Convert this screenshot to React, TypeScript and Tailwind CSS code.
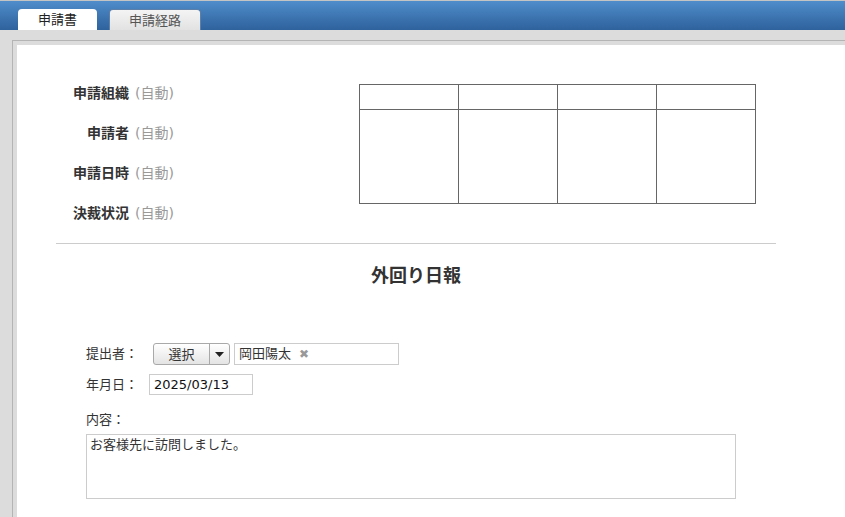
import { useState } from "react";

const font = "font-['DejaVu_Sans','Noto_Sans_CJK_JP',sans-serif]";

const infoRows = [
  { label: "申請組織" },
  { label: "申請者" },
  { label: "申請日時" },
  { label: "決裁状況" },
];

export default function App() {
  const [content, setContent] = useState("お客様先に訪問しました。");

  return (
    <div className={`h-[517px] w-[845px] overflow-hidden bg-[#dcdcdc] text-[13px] text-[#333] ${font}`}>
      {/* Tab bar */}
      <div className="flex h-[30px] items-end gap-[12px] border-t border-[#c4c4c4] bg-gradient-to-b from-[#4f8dca] to-[#2e629d] pl-[18px]">
        <div className="flex h-[21px] w-[79px] items-center justify-center rounded-t-[4px] bg-white text-[13px] leading-none text-[#222]">
          申請書
        </div>
        <div className="flex h-[21px] w-[92px] items-center justify-center rounded-t-[4px] border border-b-0 border-[#5d80aa] bg-gradient-to-b from-[#f4f4f4] to-[#e2e2e2] text-[13px] leading-none text-[#555]">
          申請経路
        </div>
      </div>

      {/* Body frame */}
      <div className="pl-[12px] pt-[10px]">
        <div className="h-[480px] border-l border-t border-[#b4b4b4] pl-[4px] pt-[4px]">
          <div className="h-full bg-white pt-[28px]">
            {/* Header info + approval table */}
            <div className="flex">
              <div className="w-[342px] shrink-0 pl-[38px]">
                {infoRows.map((r) => (
                  <div key={r.label} className="flex h-[40px] items-center text-[14px]">
                    <span className="w-[74px] text-right font-bold text-[#333]">{r.label}</span>
                    <span className="ml-[6px] text-[#999]">(自動)</span>
                  </div>
                ))}
              </div>
              <table className="mt-[11px] h-[120px] w-[397px] border-collapse self-start">
                <tbody>
                  <tr className="h-[25px]">
                    {[0, 1, 2, 3].map((i) => (
                      <td key={i} className="w-1/4 border border-[#666]" />
                    ))}
                  </tr>
                  <tr>
                    {[0, 1, 2, 3].map((i) => (
                      <td key={i} className="border border-[#666]" />
                    ))}
                  </tr>
                </tbody>
              </table>
            </div>

            <div className="ml-[39px] mt-[10px] w-[720px] border-t border-[#cccccc]" />

            <h1 className="ml-[39px] mt-[21px] w-[720px] text-center text-[18px] font-bold leading-[22px] text-[#333]">
              外回り日報
            </h1>

            {/* Form */}
            <div className="pl-[69px] pt-[56px]">
              <div className="flex h-[22px] items-center">
                <span className="w-[67px]">提出者：</span>
                <div className="flex h-[22px] rounded-[3px] border border-[#a9a9a9] bg-gradient-to-b from-[#ffffff] to-[#e4e4e4]">
                  <span className="flex w-[56px] items-center justify-center border-r border-[#a9a9a9] leading-none">選択</span>
                  <span className="flex w-[19px] items-center justify-center">
                    <svg width="9" height="5" viewBox="0 0 9 5">
                      <path d="M0 0h9L4.5 5z" fill="#222" />
                    </svg>
                  </span>
                </div>
                <div className="ml-[4px] flex h-[22px] w-[165px] items-center border border-[#cccccc] pl-[4px]">
                  <span>岡田陽太</span>
                  <span className="ml-[8px] text-[12px] text-[#999]">✖</span>
                </div>
              </div>

              <div className="mt-[9px] flex h-[21px] items-center">
                <span className="w-[63px]">年月日：</span>
                <input
                  defaultValue="2025/03/13"
                  className="h-[21px] w-[104px] border border-[#cccccc] px-[4px] text-[13px] text-[#111] outline-none"
                />
              </div>

              <div className="mt-[15px] leading-[20px]">内容：</div>
              <textarea
                value={content}
                onChange={(e) => setContent(e.target.value)}
                className="mt-[4px] block h-[65px] w-[650px] resize-none border border-[#cccccc] px-[3px] py-[1px] text-[13px] leading-[18px] text-[#333] outline-none"
              />
            </div>
          </div>
        </div>
      </div>
    </div>
  );
}
